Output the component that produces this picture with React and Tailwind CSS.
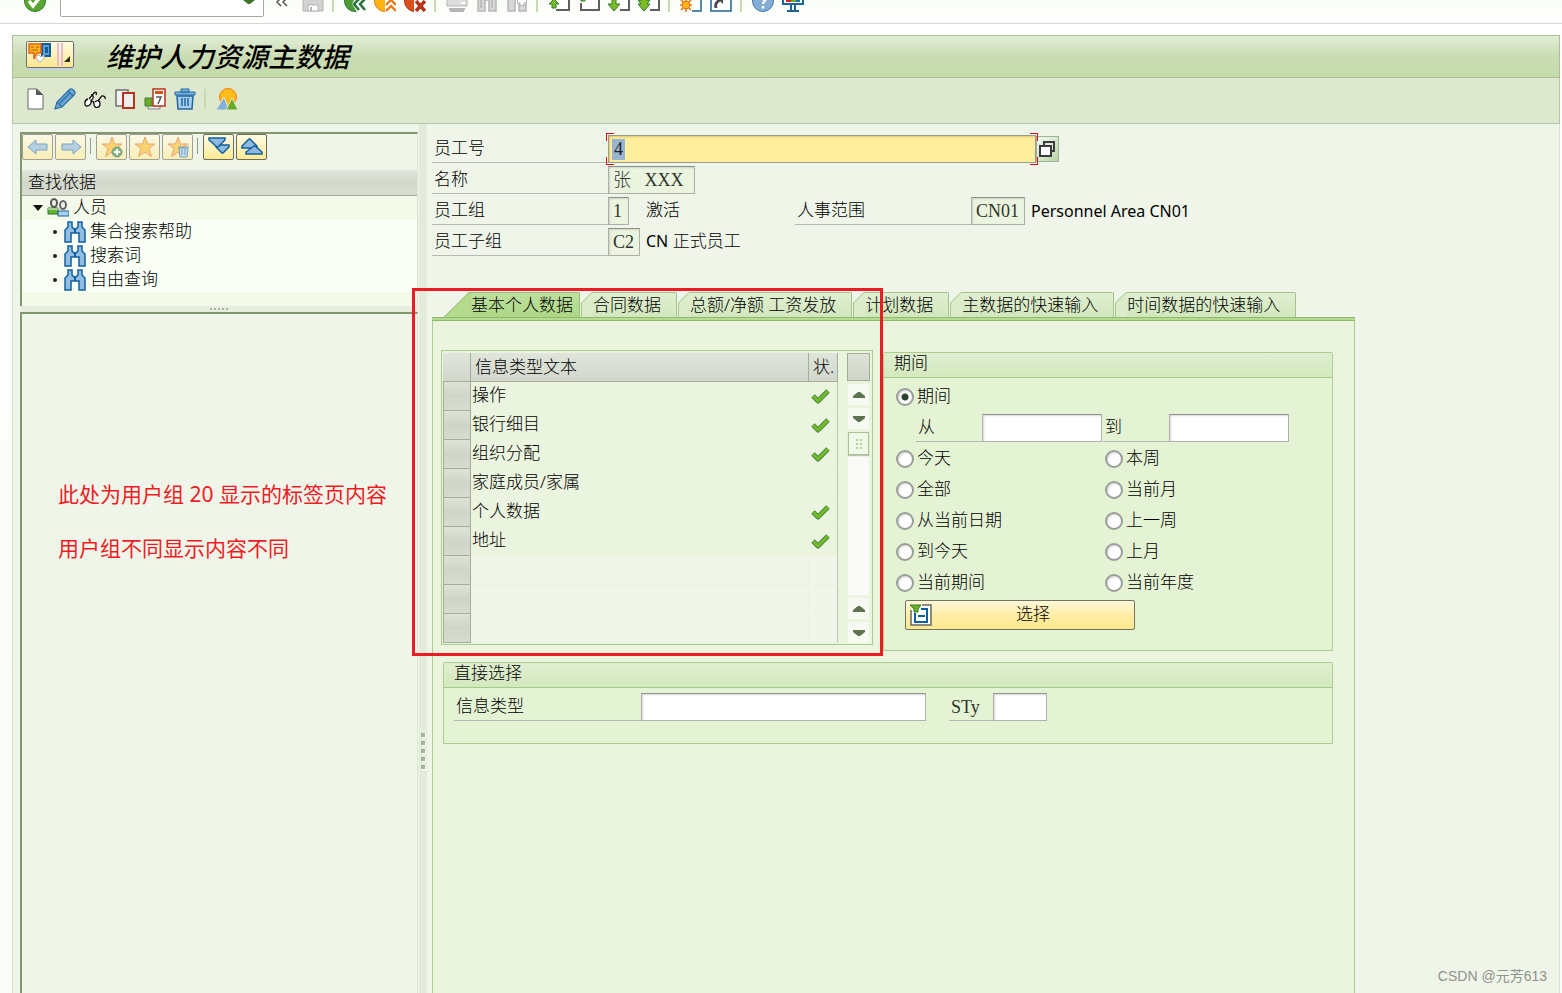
const infoTypes = [
  { text: "操作", done: true },
  { text: "银行细目", done: true },
  { text: "组织分配", done: true },
  { text: "家庭成员/家属", done: false },
  { text: "个人数据", done: true },
  { text: "地址", done: true },
  { text: "", done: false },
  { text: "", done: false },
  { text: "", done: false },
];

const tabs = [
  "合同数据",
  "总额/净额 工资发放",
  "计划数据",
  "主数据的快速输入",
  "时间数据的快速输入",
];

const periods = [
  ["今天", "本周"],
  ["全部", "当前月"],
  ["从当前日期", "上一周"],
  ["到今天", "上月"],
  ["当前期间", "当前年度"],
];

function Icon({ children, className = "w-[22px] h-[22px]", box = "0 0 22 22" }) {
  return (
    <svg
      className={`block shrink-0 ${className}`}
      viewBox={box}
      fill="none"
      aria-hidden="true"
    >
      {children}
    </svg>
  );
}

function ToolButton({ label, children }) {
  return (
    <button type="button" aria-label={label} className="shrink-0">
      <Icon>{children}</Icon>
    </button>
  );
}

function Divider() {
  return <span className="w-1 h-5 shrink-0 border-l-2 border-[#c4dcae]"></span>;
}

function SystemBar() {
  return (
    <div className="flex items-end gap-2 h-6 pl-6 pb-[11px] overflow-hidden border-b border-[#d3d9cf] bg-gradient-to-b from-[#f9fdf6] to-white">
      <ToolButton label="Enter">
        <circle cx="11" cy="11" r="10.5" fill="#5aa62e" stroke="#2f7d32" />
        <path d="M5 11l4 5 8-10" stroke="#fff" strokeWidth="3.5" />
      </ToolButton>
      <div className="relative shrink-0 w-[204px] h-[30px] ml-[6px] -mb-[5px]">
        <input
          aria-label="Command"
          className="w-full h-full bg-white border border-[#a5a8a3] rounded-xs px-1"
        />
        <svg className="absolute right-[9px] bottom-3 w-3 h-2" viewBox="0 0 12 8" aria-hidden="true">
          <path d="M0 1h12v2L7 7H5L0 3z" fill="#3f7427" />
        </svg>
      </div>
      <ToolButton label="Collapse">
        <path d="M9 8L5 12l4 4M15 8l-4 4 4 4" stroke="#555" strokeWidth="1.5" />
      </ToolButton>
      <ToolButton label="Save">
        <path d="M1 1h18l2 3v17H1z" fill="#d2d2d2" stroke="#b3b3b3" />
        <path d="M5 1h12v9H5z" fill="#f4f4f4" />
        <path d="M6 15h10v6H6z" fill="#fff" stroke="#b3b3b3" />
        <path d="M8 17h2v4H8z" fill="#b3b3b3" />
      </ToolButton>
      <Divider />
      <ToolButton label="Back">
        <circle cx="11" cy="11" r="10.5" fill="#4a9a35" stroke="#2f7440" />
        <path d="M11 8h11v14H13l-5-8z" fill="#fff" />
        <path d="M15 9l-5 5 5 6M21 9l-5 5 5 6" stroke="#2f7440" strokeWidth="2.6" />
      </ToolButton>
      <ToolButton label="Exit">
        <circle cx="11" cy="11" r="10.5" fill="#ffb511" stroke="#e67a17" />
        <path d="M11 9h11v13H11z" fill="#fff" />
        <path d="M12 15l5-5 5 5M12 21l5-5 5 5" stroke="#ed7615" strokeWidth="2.4" />
      </ToolButton>
      <ToolButton label="Cancel">
        <circle cx="11" cy="11" r="10.5" fill="#d9501d" stroke="#b02f14" />
        <path d="M10 9h12v13H10z" fill="#fff" />
        <path d="M12 11l9 10M21 11l-9 10" stroke="#b8331b" strokeWidth="3.6" />
      </ToolButton>
      <Divider />
      <ToolButton label="Print">
        <path d="M1 8h20v8H1z" fill="#ddd" stroke="#b5b5b5" />
        <path d="M15 12h4v2h-4z" fill="#fff" />
        <path d="M3 19h16M4 21h14" stroke="#b5b5b5" strokeWidth="2" />
      </ToolButton>
      <ToolButton label="Find">
        <path d="M2 4h7v17H2zM13 4h7v17h-7z" fill="#d8d8d8" stroke="#b5b5b5" strokeWidth="1.5" />
        <path d="M5 8v10M16 8v10M8 10h6" stroke="#b5b5b5" strokeWidth="1.5" />
      </ToolButton>
      <ToolButton label="Find next">
        <path d="M2 4h7v17H2zM13 12h7v9h-7z" fill="#d8d8d8" stroke="#b5b5b5" strokeWidth="1.5" />
        <path d="M16 6v10M11 11h10" stroke="#b5b5b5" strokeWidth="5" />
        <path d="M16 7v8M12 11h8" stroke="#fff" strokeWidth="3" />
      </ToolButton>
      <Divider />
      <ToolButton label="First page">
        <path d="M6 2h15v18H8" fill="#fff" stroke="#606060" strokeWidth="2" />
        <path d="M6 9l5 5H8v4H4v-4H1z" fill="#7dba25" stroke="#2f7d32" />
      </ToolButton>
      <ToolButton label="Previous page">
        <path d="M3 13v7h18V1" fill="#fff" stroke="#606060" strokeWidth="2" />
        <path d="M3 8h4v3H3z" fill="#7dba25" stroke="#2f7d32" />
      </ToolButton>
      <ToolButton label="Next page">
        <path d="M6 1h15v19h-9" fill="#fff" stroke="#606060" strokeWidth="2" />
        <path d="M4 9h4v5h4l-6 7-6-7h4z" fill="#7dba25" stroke="#2f7d32" />
      </ToolButton>
      <ToolButton label="Last page">
        <path d="M6 1h15v19h-9" fill="#fff" stroke="#606060" strokeWidth="2" />
        <path d="M4 8h4v2h4l-3 4h3l-6 7-6-7h3l-3-4h4z" fill="#7dba25" stroke="#2f7d32" />
      </ToolButton>
      <Divider />
      <ToolButton label="New session">
        <path d="M6 1h15v20h-9" fill="#fff" stroke="#1c6396" strokeWidth="1.5" />
        <circle cx="6" cy="15" r="4" fill="#ffb511" stroke="#ed7615" />
        <path d="M6 9v3M6 18v4M0 15h3M9 15h3M1 10l2 2M9 18l2 2M11 10l-2 2M1 20l2-2" stroke="#ed7615" strokeWidth="1.6" />
      </ToolButton>
      <ToolButton label="Shortcut">
        <path d="M1 1h20v20H1z" fill="#fff" stroke="#1c6396" strokeWidth="1.5" />
        <path d="M6 18c-1-4 0-6 4-8" stroke="#4b4651" strokeWidth="3" />
        <path d="M7 8h6v6z" fill="#4b4651" />
      </ToolButton>
      <Divider />
      <ToolButton label="Help">
        <circle cx="11" cy="11" r="10.5" fill="#83add4" stroke="#3f78ad" />
        <path d="M7.5 8c0-4 7-4 7 0 0 2-3.500 3-3.500 6M11 16v2.500" stroke="#fff" strokeWidth="2.5" />
      </ToolButton>
      <ToolButton label="Customize layout">
        <path d="M1 1h20v13H1z" fill="#fff" stroke="#1c6396" strokeWidth="2" />
        <path d="M4 8h5v4H4z" fill="#d8262c" />
        <path d="M9 8h5v4H9z" fill="#6bab25" />
        <path d="M14 8h4v4h-4z" fill="#1f6db3" />
        <path d="M9 15v5M13 15v5M5 21h12" stroke="#1c6396" strokeWidth="2" />
      </ToolButton>
    </div>
  );
}

function TitleBar() {
  return (
    <div className="flex items-center h-[43px] pl-[13px] border border-[#a9c09a] bg-gradient-to-b from-[#e2eed6] via-[#cbdcb4] to-[#c4dba9]">
      <button
        type="button"
        aria-label="Menu"
        className="flex items-start w-12 h-[27px] mb-1 p-px border border-[#75746a] rounded-xs bg-gradient-to-b from-[#fffbe0] to-[#fde78f] shadow-[1px_2px_0_#c3d2e2]"
      >
        <Icon className="w-11 h-[23px]" box="0 0 44 23">
          <path d="M14 1h8v12h-8z" fill="#5aa0d2" stroke="#155d94" strokeWidth="2" />
          <path d="M17 4h3v6h-3z" fill="#155d94" />
          <path d="M1 1h12v9H9l-3 6v-6H1z" fill="#ffbb18" stroke="#e2601a" strokeWidth="1.5" />
          <path d="M3 4h3M8 4h3M3 7h7" stroke="#c5451a" strokeWidth="1.2" />
          <path d="M8 13l3-1 2 2 3-2v4l-4 3-3-2z" fill="#fff" stroke="#b5b5b5" />
          <path d="M30 0v23M34 0v23" stroke="#e8b7d6" strokeWidth="2" />
          <path d="M42 13v6h-6z" fill="#26331d" />
        </Icon>
      </button>
      <h1 className="ml-8 text-[27px] leading-8 font-medium italic text-black">
        维护人力资源主数据
      </h1>
    </div>
  );
}

function AppToolbar() {
  return (
    <div className="flex items-center gap-2 h-[46px] pl-[11px] pb-1 border-x border-b border-[#b3c8a4] bg-[#dee8cf]">
      <ToolButton label="Create">
        <path d="M4 1h9l6 6v14H4z" fill="#fff" stroke="#666" />
        <path d="M12 1v6h7z" fill="#555" />
      </ToolButton>
      <ToolButton label="Change">
        <path d="M1 21l2-7L15 2c3-3 8 2 5 5L8 19z" fill="#6ba3d3" stroke="#2b6fa6" strokeWidth="1.2" />
        <path d="M3 14l5 5M14 3l5 5M6 15l10-10" stroke="#2b6fa6" strokeWidth="1.2" />
      </ToolButton>
      <ToolButton label="Display">
        <g stroke="#111" strokeWidth="1.3">
          <path d="M4 11c-4 1-4 7-1 7s5-3 4-6c3-1 3-5 0-5M7 13c2 0 3 1 3 3 0 5 6 4 6 0s-3-4-5-2" fill="#fff" />
          <path d="M5 11l5-6c2-2 3 0 2 2M14 13l3-4c1-2 5-1 4 2" />
        </g>
      </ToolButton>
      <ToolButton label="Copy">
        <path d="M2 2h12v16H2z" fill="#f2f2f2" stroke="#707070" strokeWidth="1.5" />
        <path d="M9 5h11v15H9z" fill="#eee" stroke="#b8331b" strokeWidth="2" />
      </ToolButton>
      <ToolButton label="Delimit">
        <path d="M4 16v5h12v-4" fill="#e6e6e6" stroke="#888" />
        <path d="M1 10h7v8H1z" fill="#6bab25" stroke="#3f7d35" />
        <path d="M9 1h12v17H9z" fill="#fff" stroke="#b8331b" strokeWidth="1.5" />
        <path d="M11 3h8v3h-8z" fill="#dc5014" />
        <path d="M12 9h5l-3 7" stroke="#555" strokeWidth="1.5" />
      </ToolButton>
      <ToolButton label="Delete">
        <path d="M3 8h16l-1 13H4z" fill="#a9cdea" stroke="#1c6aa4" strokeWidth="1.5" />
        <path d="M1 4h20v3H1zM7 1h8v3H7z" fill="#83b4dd" stroke="#1c6aa4" />
        <path d="M8 10v8M11 10v8M14 10v8" stroke="#1c6aa4" strokeWidth="1.5" />
      </ToolButton>
      <Divider />
      <ToolButton label="Overview">
        <circle cx="12" cy="9" r="8.5" fill="#ffbb18" stroke="#f08214" />
        <path d="M0 22l8-13 5 13z" fill="#81b1da" stroke="#dee8cf" />
        <path d="M10 22l6-12 6 12z" fill="#67ab22" stroke="#dee8cf" />
      </ToolButton>
    </div>
  );
}

function PaneButton({ label, disabled, children }) {
  return (
    <button
      type="button"
      aria-label={label}
      disabled={disabled}
      className="flex items-center justify-center w-[31px] h-[26px] border border-[#6c6b58] rounded-xs bg-gradient-to-b from-[#fffbe4] to-[#ffea91] disabled:opacity-60"
    >
      <Icon>{children}</Icon>
    </button>
  );
}

function Star() {
  return (
    <path
      d="M11 1l2.500 7H21l-6 4.500 2.500 8L11 16l-6.500 4.500 2.500-8L1 8h7.500z"
      fill="#ffbf1f"
      stroke="#e4702f"
    />
  );
}

function Binoculars() {
  return (
    <Icon>
      <path
        d="M4 1h4v5l2 2h2l2-2V1h4v5l3 3v12h-6v-9H7v9H1V9l3-3z"
        fill="#94bce2"
        stroke="#10609c"
        strokeWidth="1.5"
      />
      <path d="M11 7v5" stroke="#10609c" strokeWidth="2" />
    </Icon>
  );
}

function SearchPane() {
  return (
    <aside className="flex flex-col shrink-0 w-[398px] ml-[7px] pt-2">
      <div className="h-[174px] border-t-2 border-l-2 border-[#83976f] border-r border-r-[#dbe6d2] bg-[#f3faea]">
        <div className="flex items-start gap-[2px] h-9 bg-[#f0f5ea]">
          <PaneButton label="Back" disabled>
            <path d="M1 11l8-7v4h11v6H9v4z" fill="#8fb9e0" stroke="#2e6da4" />
          </PaneButton>
          <PaneButton label="Forward" disabled>
            <path d="M21 11l-8-7v4H2v6h11v4z" fill="#8fb9e0" stroke="#2e6da4" />
          </PaneButton>
          <span className="w-1 h-4 mt-1 ml-[2px] border-l border-[#8ba08f]"></span>
          <PaneButton label="Add favorite" disabled>
            <Star />
            <circle cx="16" cy="16" r="5" fill="#4a8a45" stroke="#286a35" />
            <path d="M16 13v6M13 16h6" stroke="#fff" strokeWidth="2" />
          </PaneButton>
          <PaneButton label="Favorites" disabled>
            <Star />
          </PaneButton>
          <PaneButton label="Remove favorite" disabled>
            <Star />
            <path d="M12 12h9l-1 9h-7z" fill="#a9cdea" stroke="#1c6aa4" />
            <path d="M11 11h11M15 13v6M18 13v6" stroke="#1c6aa4" />
          </PaneButton>
          <span className="w-1 h-4 mt-1 ml-[2px] border-l border-[#8ba08f]"></span>
          <PaneButton label="Expand">
            <path d="M8 9h13v2l-6 6h-1L8 11z" fill="#8fb9e0" stroke="#10609c" strokeWidth="1.5" />
            <path d="M1 2h16v2l-7 7H9L1 4z" fill="#8fb9e0" stroke="#10609c" strokeWidth="1.5" />
          </PaneButton>
          <PaneButton label="Collapse">
            <path d="M8 3h1l7 7v2H1v-2z" fill="#8fb9e0" stroke="#10609c" strokeWidth="1.5" />
            <path d="M13 10h1l7 6v2H5v-2z" fill="#8fb9e0" stroke="#10609c" strokeWidth="1.5" />
          </PaneButton>
        </div>
        <h2 className="h-[26px] pl-[6px] leading-6 border-b border-[#9eae94] bg-gradient-to-b from-[#e1e6dc] via-[#d3d8cc] to-[#d7ddd1]">
          查找依据
        </h2>
        <ul>
          <li>
            <div className="flex items-center h-6 pl-[11px]">
              <svg className="w-[10px] h-[6px]" viewBox="0 0 10 6" aria-hidden="true">
                <path d="M0 0h10L5 6z" fill="#111" />
              </svg>
              <span className="ml-1">
                <Icon>
                  <ellipse cx="7" cy="6" rx="3" ry="4" fill="#eee" stroke="#555" strokeWidth="2" />
                  <path d="M1 11h10v6H1z" fill="#65b32e" stroke="#2f6d32" />
                  <path d="M1 12h10" stroke="#fff" />
                  <ellipse cx="16" cy="8" rx="3" ry="4" fill="#eee" stroke="#666" strokeWidth="2" />
                  <path d="M11 19v-5h11v5z" fill="#a9d2f0" stroke="#1c6396" />
                </Icon>
              </span>
              <span className="ml-1 leading-6 pb-0.5">人员</span>
            </div>
            <ul className="bg-[#fafff6]">
              {["集合搜索帮助", "搜索词", "自由查询"].map((item) => (
                <li key={item} className="flex items-center h-6 pl-[31px]">
                  <span className="w-1 h-1 rounded-full bg-[#222]"></span>
                  <span className="ml-[7px]">
                    <Binoculars />
                  </span>
                  <span className="ml-1 leading-6 pb-0.5">{item}</span>
                </li>
              ))}
            </ul>
          </li>
        </ul>
      </div>
      <div className="flex items-center justify-center gap-[2px] h-[6px] bg-[#e7eedf]">
        {[1, 2, 3, 4, 5].map((dot) => (
          <span key={dot} className="w-[2px] h-[2px] bg-[#a3b29a]"></span>
        ))}
      </div>
      <div className="flex-1 flex flex-col gap-[26px] pt-[166px] pl-9 border-t-2 border-l-2 border-[#83976f] border-r border-r-[#dbe6d2] text-[21px] leading-7 text-[#ed1c24] font-normal whitespace-nowrap">
        <p>此处为用户组 20 显示的标签页内容</p>
        <p>用户组不同显示内容不同</p>
      </div>
    </aside>
  );
}

function FieldLabel({ htmlFor, className = "w-44", children }) {
  return (
    <label
      htmlFor={htmlFor}
      className={`shrink-0 h-7 pl-[2px] leading-[26px] border-b border-[#b5bab0] ${className}`}
    >
      {children}
    </label>
  );
}

function ReadOnlyField({ id, value, className }) {
  return (
    <input
      id={id}
      readOnly
      value={value}
      className={`h-7 pl-1 border border-[#abafa7] border-t-[#8e918b] bg-[#eaf4df] font-['Liberation_Serif','Noto_Sans_CJK_SC',serif] text-lg text-[#30352c] shadow-[inset_1px_1px_2px_#ccd5c3] ${className}`}
    />
  );
}

function EditField({ id, className }) {
  return (
    <input
      id={id}
      className={`shrink-0 h-7 px-1 border border-[#b0b0b0] border-t-[#8f948e] bg-white shadow-[inset_1px_1px_2px_#d8d8d8] ${className}`}
    />
  );
}

function EmployeeHeader() {
  return (
    <div className="flex flex-col gap-[3px] pt-[11px]">
      <div className="flex">
        <FieldLabel htmlFor="pernr">员工号</FieldLabel>
        <div className="relative w-[428px]">
          <div className="h-7 pl-[3px] flex items-center border border-[#999c8f] bg-[#ffee9e] shadow-[inset_1px_1px_2px_#d8c777]">
            <input
              id="pernr"
              defaultValue="4"
              className="w-[13px] h-[21px] pl-0.5 bg-[#99b4d1] font-['Liberation_Serif',serif] text-lg text-[#222]"
            />
          </div>
          <span className="absolute -left-[2px] -top-[2px] w-2 h-2 border-l border-t border-[#d90f16]"></span>
          <span className="absolute -left-[2px] -bottom-[2px] w-2 h-2 border-l border-b border-[#d90f16]"></span>
          <span className="absolute -right-[2px] -top-[2px] w-2 h-2 border-r border-t border-[#d90f16]"></span>
          <span className="absolute -right-[2px] -bottom-[2px] w-2 h-2 border-r border-b border-[#d90f16]"></span>
        </div>
        <button
          type="button"
          aria-label="Search help"
          className="flex items-center w-[23px] h-[26px] mt-px pl-[2px] border border-[#a3b19b] bg-gradient-to-br from-[#f7fbf4] to-[#b9d5a5]"
        >
          <Icon className="w-4 h-4" box="0 0 16 16">
            <path d="M5 4V1h10v9h-3" stroke="#3b3a40" strokeWidth="2" />
            <path d="M1 5h11v10H1z" fill="#fff" stroke="#3b3a40" strokeWidth="2" />
          </Icon>
        </button>
      </div>
      <div className="flex">
        <FieldLabel htmlFor="name">名称</FieldLabel>
        <ReadOnlyField id="name" value="张&nbsp;&nbsp; XXX" className="w-[87px]" />
      </div>
      <div className="flex">
        <FieldLabel htmlFor="group">员工组</FieldLabel>
        <ReadOnlyField id="group" value="1" className="w-[21px]" />
        <span className="w-[166px] pl-[17px] leading-[26px]">激活</span>
        <FieldLabel htmlFor="area">人事范围</FieldLabel>
        <ReadOnlyField id="area" value="CN01" className="w-[54px]" />
        <span className="pl-[6px] text-base leading-7 font-normal">Personnel Area CN01</span>
      </div>
      <div className="flex">
        <FieldLabel htmlFor="subgroup">员工子组</FieldLabel>
        <ReadOnlyField id="subgroup" value="C2" className="w-8" />
        <span className="pl-[6px] leading-[26px]">
          <span className="text-base font-normal">CN</span> 正式员工
        </span>
      </div>
    </div>
  );
}

function Tab({ children }) {
  return (
    <button type="button" role="tab" aria-selected="false" className="flex h-[25px]">
      <svg className="w-3 h-[25px]" viewBox="0 0 12 25" aria-hidden="true">
        <path d="M0 25V11L11 0h1v25z" fill="#dcebca" />
        <path d="M0.500 25V11L11 0.500h1" fill="none" stroke="#a3c48b" />
      </svg>
      <span className="h-full pr-[15px] leading-6 border-t border-r border-[#a3c48b] rounded-tr-xs bg-gradient-to-b from-[#e1efd2] to-[#d2e7bc]">
        {children}
      </span>
    </button>
  );
}

function TabStrip() {
  return (
    <div role="tablist" className="flex gap-px pl-3 whitespace-nowrap">
      <button type="button" role="tab" aria-selected="true" className="flex h-[25px]">
        <svg className="w-[27px] h-[25px]" viewBox="0 0 27 25" aria-hidden="true">
          <path d="M0 25L25 0h2v25z" fill="#b4da8d" />
          <path d="M0 25L25 0.500h2" fill="none" stroke="#94bf72" />
        </svg>
        <span className="h-full pr-[6px] leading-6 border-t border-r border-[#94bf72] rounded-tr-xs bg-gradient-to-b from-[#bfe09f] to-[#add785]">
          基本个人数据
        </span>
      </button>
      {tabs.map((tab) => (
        <Tab key={tab}>{tab}</Tab>
      ))}
    </div>
  );
}

function ScrollArrow({ label, down }) {
  return (
    <button
      type="button"
      aria-label={label}
      className="flex items-center justify-center w-[21px] h-[21px] bg-[#f6faf3]"
    >
      <svg className="w-3 h-[6px]" viewBox="0 0 12 6" aria-hidden="true">
        <path d={down ? "M0 0h12v2L7 6H5L0 2z" : "M0 6h12V4L7 0H5L0 4z"} fill="#5e7350" />
      </svg>
    </button>
  );
}

function InfoTypeTable() {
  return (
    <div className="flex items-start gap-[9px] w-[432px] h-[295px] pt-[2px] pl-px border border-[#a9cd8b]">
      <table className="w-[395px] table-fixed border-separate border-spacing-0 text-left">
        <thead>
          <tr className="h-[29px] bg-gradient-to-b from-[#e0e5db] to-[#d1d7cb]">
            <th className="w-7 p-0 border-r border-b border-[#a3ae9b]"></th>
            <th className="p-0 pl-1 font-light leading-7 border-r border-b border-[#a3ae9b]">
              信息类型文本
            </th>
            <th className="w-[29px] p-0 pl-1 font-light leading-7 border-r border-b border-[#a3ae9b]">
              状.
            </th>
          </tr>
        </thead>
        <tbody>
          {infoTypes.map((row, index) => (
            <tr key={index} className={row.text ? "h-[29px]" : "h-[29px] bg-[#f0f6ea]"}>
              <td className="p-0 border border-t-0 border-[#a3ae9b] bg-gradient-to-b from-[#dde3d7] via-[#cfd5c8] to-[#d6dccf]"></td>
              <td className="p-0 pl-px leading-[26px] align-top border-r border-b border-[#ebf4df]">
                {row.text}
              </td>
              <td className="p-0 pl-[2px] border-r border-r-[#b9c8ac] border-b border-b-[#ebf4df]">
                {row.done && (
                  <Icon className="w-5 h-4" box="0 0 20 16">
                    <path d="M2 8l5 5L17 3" stroke="#4c8a4a" strokeWidth="5" strokeLinejoin="round" />
                    <path d="M2 8l5 5L17 3" stroke="#74ba28" strokeWidth="3" strokeLinejoin="round" />
                  </Icon>
                )}
              </td>
            </tr>
          ))}
        </tbody>
      </table>
      <div className="flex flex-col items-center gap-[3px] w-[23px] h-[290px]">
        <button
          type="button"
          aria-label="Table settings"
          className="w-[23px] h-7 border border-[#a0ad97] bg-gradient-to-b from-[#dde3d7] to-[#cfd5c8]"
        ></button>
        <ScrollArrow label="Scroll up" />
        <ScrollArrow label="Scroll down" down />
        <div className="flex-1 w-[21px] bg-[#fafbf9]">
          <div className="grid grid-cols-2 content-center justify-center gap-[2px] w-full h-[23px] border border-[#aac394] bg-[#f0f8e7] shadow-[0_1px_1px_#b9c3b1]">
            {[1, 2, 3, 4, 5, 6].map((dot) => (
              <span key={dot} className="w-[2px] h-[2px] odd:justify-self-end bg-[#b9cfa6]"></span>
            ))}
          </div>
        </div>
        <ScrollArrow label="Page up" />
        <ScrollArrow label="Page down" down />
      </div>
    </div>
  );
}

function GroupBox({ title, className, children }) {
  return (
    <section className={`border border-[#accd8f] rounded-t-xs bg-[#e5f3d5] ${className}`}>
      <h2 className="h-[25px] pl-[10px] leading-5 border-b border-[#a5c987] bg-gradient-to-b from-[#dfeed1] to-[#d4e9bd]">
        {title}
      </h2>
      {children}
    </section>
  );
}

function PeriodRadio({ label, defaultChecked }) {
  return (
    <label className="flex items-center gap-[3px] h-7">
      <input
        type="radio"
        name="period"
        defaultChecked={defaultChecked}
        className="appearance-none w-[18px] h-[18px] rounded-full border-2 border-[#9a9e99] bg-white shadow-[inset_1px_1px_2px_#d5d5d5] checked:bg-[radial-gradient(circle,#2c4230_3px,#fff_4px)]"
      />
      <span className="leading-6 pb-0.5">{label}</span>
    </label>
  );
}

function PeriodGroup() {
  return (
    <GroupBox title="期间" className="w-[450px] h-[299px] mt-[2px]">
      <div className="flex flex-col gap-[3px] pt-[5px] pl-3">
        <PeriodRadio label="期间" defaultChecked />
        <div className="flex gap-px pl-5">
          <div className="flex">
            <FieldLabel htmlFor="from" className="w-[66px]">从</FieldLabel>
            <EditField id="from" className="w-[120px]" />
          </div>
          <div className="flex">
            <FieldLabel htmlFor="to" className="w-[66px]">到</FieldLabel>
            <EditField id="to" className="w-[120px]" />
          </div>
        </div>
        {periods.map(([left, right]) => (
          <div key={left} className="grid grid-cols-[209px_1fr]">
            <PeriodRadio label={left} />
            <PeriodRadio label={right} />
          </div>
        ))}
        <button
          type="button"
          className="flex items-center w-[230px] h-[30px] ml-[9px] pl-1 border border-[#74735f] rounded-xs bg-gradient-to-b from-[#fff8d9] via-[#ffeda5] to-[#fde88f]"
        >
          <Icon>
            <path d="M12 1h9v20H1V6" stroke="#666" strokeWidth="1.5" fill="#fff" />
            <path d="M5 9v9h12V5h-6" stroke="#0f5f9c" strokeWidth="2" fill="#fff" />
            <path d="M8 12h7" stroke="#0f5f9c" strokeWidth="2" />
            <path d="M0 1h11L8 5v3H4V5z" fill="#6bb324" stroke="#2f7d32" />
          </Icon>
          <span className="flex-1 text-center leading-6 pb-0.5">选择</span>
        </button>
      </div>
    </GroupBox>
  );
}

function DirectSelection() {
  return (
    <GroupBox title="直接选择" className="w-[890px] h-[82px] mt-[11px] ml-[2px]">
      <div className="flex pt-[5px] pl-[10px]">
        <FieldLabel htmlFor="infotype" className="w-[187px]">信息类型</FieldLabel>
        <EditField id="infotype" className="w-[285px]" />
        <label
          htmlFor="sty"
          className="w-[44px] h-7 ml-[23px] pl-0.5 leading-7 border-b border-[#b5bab0] font-['Liberation_Serif',serif] text-lg text-[#30352c]"
        >
          STy
        </label>
        <EditField id="sty" className="w-[54px]" />
      </div>
    </GroupBox>
  );
}

function App() {
  return (
    <div className="flex flex-col min-h-screen bg-white font-['Noto_Sans','Noto_Sans_CJK_SC',sans-serif] font-light text-[17px] text-black">
      <SystemBar />
      <div className="relative flex-1 flex flex-col pt-[11px] pl-3 pr-[2px] bg-gradient-to-b from-white to-[#f9fcf7]">
        <TitleBar />
        <AppToolbar />
        <div className="flex-1 flex border-x border-[#d5e2cd] bg-[#f0f5ea]">
          <SearchPane />
          <div className="flex flex-col items-center gap-1 shrink-0 w-2 ml-px pt-[609px] bg-[#e3ecda]">
            {[1, 2, 3, 4, 5].map((dot) => (
              <span key={dot} className="w-1 h-1 bg-[#a5b399] shadow-[1px_1px_0_#fff]"></span>
            ))}
          </div>
          <main className="flex-1 flex flex-col min-w-0 pl-[5px]">
            <EmployeeHeader />
            <div className="relative flex-1 flex flex-col w-[923px] mt-9">
              <TabStrip />
              <div className="h-1 border-y border-[#8fba6a] bg-[#b6da91]"></div>
              <div className="flex-1 pt-[29px] pl-2 border-x border-[#accd8f] bg-[#ebf4df]">
                <div className="flex gap-[10px]">
                  <InfoTypeTable />
                  <PeriodGroup />
                </div>
                <DirectSelection />
              </div>
              <div className="absolute -left-5 -top-1 w-[471px] h-[368px] border-3 border-[#ed1c24] pointer-events-none"></div>
            </div>
          </main>
        </div>
        <p className="absolute right-[15px] bottom-[7px] font-['Liberation_Sans','Noto_Sans_CJK_SC',sans-serif] text-sm leading-5 font-normal text-[#8d938b]">
          CSDN @元芳613
        </p>
      </div>
    </div>
  );
}

export default App;
